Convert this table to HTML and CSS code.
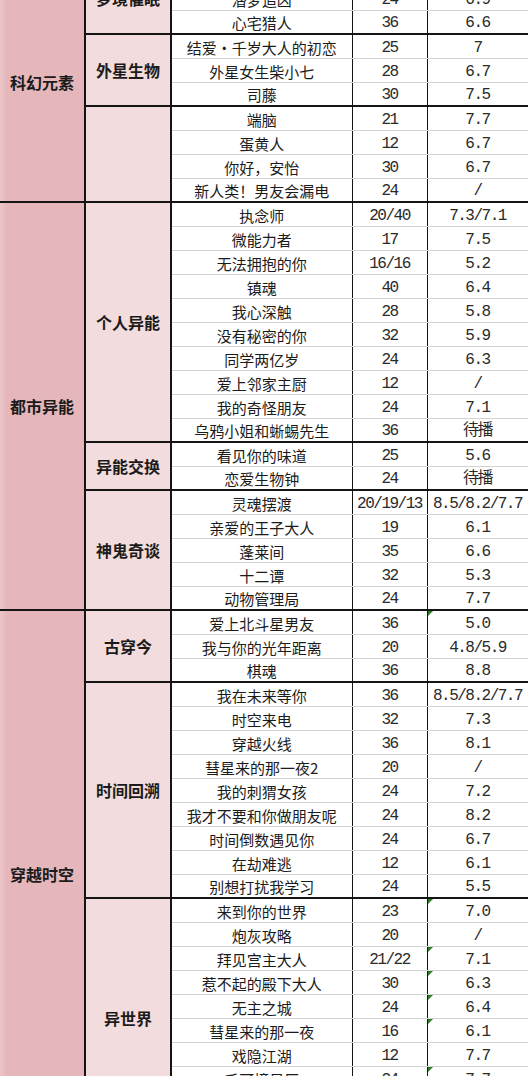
FILE: index.html
```html
<!DOCTYPE html>
<html lang="zh-CN">
<head>
<meta charset="utf-8">
<title>剧集分类表</title>
<link rel="stylesheet" href="styles.css">
</head>
<body>
<table class="sheet">
  <colgroup>
    <col class="c-cat"><col class="c-sub"><col class="c-name"><col class="c-ep"><col class="c-score">
  </colgroup>
  <tbody>
    <tr class="row">
      <td class="cat group-end" rowspan="10">科幻元素</td>
      <td class="sub sub-end" rowspan="3">梦境催眠</td>
      <td class="name"></td><td class="num"></td><td class="num"></td>
    </tr>
    <tr class="row"><td class="name">潜梦追凶</td><td class="num">24</td><td class="num">6.9</td></tr>
    <tr class="row end"><td class="name">心宅猎人</td><td class="num">36</td><td class="num">6.6</td></tr>

    <tr class="row"><td class="sub sub-end" rowspan="3">外星生物</td><td class="name">结爱·千岁大人的初恋</td><td class="num">25</td><td class="num">7</td></tr>
    <tr class="row"><td class="name">外星女生柴小七</td><td class="num">28</td><td class="num">6.7</td></tr>
    <tr class="row end"><td class="name">司藤</td><td class="num">30</td><td class="num">7.5</td></tr>

    <tr class="row"><td class="sub sub-end" rowspan="4"></td><td class="name">端脑</td><td class="num">21</td><td class="num">7.7</td></tr>
    <tr class="row"><td class="name">蛋黄人</td><td class="num">12</td><td class="num">6.7</td></tr>
    <tr class="row"><td class="name">你好，安怡</td><td class="num">30</td><td class="num">6.7</td></tr>
    <tr class="row end"><td class="name">新人类！男友会漏电</td><td class="num">24</td><td class="num">/</td></tr>

    <tr class="row">
      <td class="cat group-end" rowspan="17">都市异能</td>
      <td class="sub sub-end" rowspan="10">个人异能</td>
      <td class="name">执念师</td><td class="num">20/40</td><td class="num">7.3/7.1</td>
    </tr>
    <tr class="row"><td class="name">微能力者</td><td class="num">17</td><td class="num">7.5</td></tr>
    <tr class="row"><td class="name">无法拥抱的你</td><td class="num">16/16</td><td class="num">5.2</td></tr>
    <tr class="row"><td class="name">镇魂</td><td class="num">40</td><td class="num">6.4</td></tr>
    <tr class="row"><td class="name">我心深触</td><td class="num">28</td><td class="num">5.8</td></tr>
    <tr class="row"><td class="name">没有秘密的你</td><td class="num">32</td><td class="num">5.9</td></tr>
    <tr class="row"><td class="name">同学两亿岁</td><td class="num">24</td><td class="num">6.3</td></tr>
    <tr class="row"><td class="name">爱上邻家主厨</td><td class="num">12</td><td class="num">/</td></tr>
    <tr class="row"><td class="name">我的奇怪朋友</td><td class="num">24</td><td class="num">7.1</td></tr>
    <tr class="row end"><td class="name">乌鸦小姐和蜥蜴先生</td><td class="num">36</td><td class="num">待播</td></tr>

    <tr class="row"><td class="sub sub-end" rowspan="2">异能交换</td><td class="name">看见你的味道</td><td class="num">25</td><td class="num">5.6</td></tr>
    <tr class="row end"><td class="name">恋爱生物钟</td><td class="num">24</td><td class="num">待播</td></tr>

    <tr class="row"><td class="sub sub-end" rowspan="5">神鬼奇谈</td><td class="name">灵魂摆渡</td><td class="num">20/19/13</td><td class="num">8.5/8.2/7.7</td></tr>
    <tr class="row"><td class="name">亲爱的王子大人</td><td class="num">19</td><td class="num">6.1</td></tr>
    <tr class="row"><td class="name">蓬莱间</td><td class="num">35</td><td class="num">6.6</td></tr>
    <tr class="row"><td class="name">十二谭</td><td class="num">32</td><td class="num">5.3</td></tr>
    <tr class="row end"><td class="name">动物管理局</td><td class="num">24</td><td class="num">7.7</td></tr>

    <tr class="row">
      <td class="cat group-end" rowspan="22">穿越时空</td>
      <td class="sub sub-end" rowspan="3">古穿今</td>
      <td class="name">爱上北斗星男友</td><td class="num">36</td><td class="num mark">5.0</td>
    </tr>
    <tr class="row"><td class="name">我与你的光年距离</td><td class="num">20</td><td class="num">4.8/5.9</td></tr>
    <tr class="row end"><td class="name">棋魂</td><td class="num">36</td><td class="num">8.8</td></tr>

    <tr class="row"><td class="sub sub-end" rowspan="9">时间回溯</td><td class="name">我在未来等你</td><td class="num">36</td><td class="num">8.5/8.2/7.7</td></tr>
    <tr class="row"><td class="name">时空来电</td><td class="num">32</td><td class="num">7.3</td></tr>
    <tr class="row"><td class="name">穿越火线</td><td class="num">36</td><td class="num">8.1</td></tr>
    <tr class="row"><td class="name">彗星来的那一夜2</td><td class="num">20</td><td class="num">/</td></tr>
    <tr class="row"><td class="name">我的刺猬女孩</td><td class="num">24</td><td class="num">7.2</td></tr>
    <tr class="row"><td class="name">我才不要和你做朋友呢</td><td class="num">24</td><td class="num">8.2</td></tr>
    <tr class="row"><td class="name">时间倒数遇见你</td><td class="num">24</td><td class="num">6.7</td></tr>
    <tr class="row"><td class="name">在劫难逃</td><td class="num">12</td><td class="num">6.1</td></tr>
    <tr class="row end"><td class="name">别想打扰我学习</td><td class="num">24</td><td class="num">5.5</td></tr>

    <tr class="row"><td class="sub sub-end" rowspan="10">异世界</td><td class="name">来到你的世界</td><td class="num">23</td><td class="num mark">7.0</td></tr>
    <tr class="row"><td class="name">炮灰攻略</td><td class="num">20</td><td class="num">/</td></tr>
    <tr class="row"><td class="name">拜见宫主大人</td><td class="num">21/22</td><td class="num mark">7.1</td></tr>
    <tr class="row"><td class="name">惹不起的殿下大人</td><td class="num">30</td><td class="num mark">6.3</td></tr>
    <tr class="row"><td class="name">无主之城</td><td class="num">24</td><td class="num mark">6.4</td></tr>
    <tr class="row"><td class="name">彗星来的那一夜</td><td class="num">16</td><td class="num mark">6.1</td></tr>
    <tr class="row"><td class="name">戏隐江湖</td><td class="num">12</td><td class="num">7.7</td></tr>
    <tr class="row"><td class="name">千可撞星辰</td><td class="num">24</td><td class="num mark">7.7</td></tr>
    <tr class="row"><td class="name"></td><td class="num"></td><td class="num"></td></tr>
    <tr class="row end"><td class="name"></td><td class="num"></td><td class="num"></td></tr>
  </tbody>
</table>
</body>
</html>
```
FILE: styles.css
```css
html, body {
  margin: 0;
  padding: 0;
  background: #ffffff;
  overflow: hidden;
}

.sheet {
  border-collapse: collapse;
  table-layout: fixed;
  width: 528px;
  margin-top: -38px;
  color: #1b1b1b;
  font-family: "Noto Sans CJK SC", "Noto Sans", sans-serif;
  font-size: 15px;
}

.c-cat { width: 85px; }
.c-sub { width: 86px; }
.c-name { width: 181px; }
.c-ep { width: 75px; }
.c-score { width: 101px; }

.row { height: 24px; }

.sheet td {
  padding: 0;
  text-align: center;
  vertical-align: middle;
  line-height: 18px;
  white-space: nowrap;
  overflow: hidden;
}

.cat {
  background: linear-gradient(to right, #ecc6c9 0, #e5b7bb 7px);
  font-weight: 700;
  font-size: 16px;
  border-right: 2px solid #141414;
  padding-top: 3px;
}

.sub {
  background: #f2dcdd;
  font-weight: 700;
  font-size: 16px;
  border-right: 2px solid #141414;
}

.group-end,
.sub-end {
  border-bottom: 2px solid #141414;
}

.name,
.num {
  background: #ffffff;
  border-bottom: 1px solid #d3d3d3;
  border-right: 1px solid #141414;
  padding-top: 3px !important;
}

.row.end .name,
.row.end .num {
  border-bottom: 2px solid #141414;
}

.num {
  font-family: "Liberation Mono", "Noto Sans CJK SC", monospace;
  font-size: 16px;
  letter-spacing: -1.5px;
  color: #2a2a2a;
}

.mark {
  position: relative;
}

.mark::before {
  content: "";
  position: absolute;
  left: 0;
  top: 0;
  border-top: 5px solid #2f7d25;
  border-right: 5px solid transparent;
}
```
